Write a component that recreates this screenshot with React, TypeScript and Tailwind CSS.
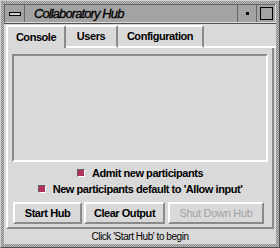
import React from "react";

const font = { fontFamily: '"Liberation Sans", Arial, sans-serif' };

function Check({ label }: { label: string }) {
  return (
    <div className="h-[12px] flex items-center gap-[7px]">
      <div className="w-[8px] h-[8px] bg-[#b03060] border border-t-[#5e5e5e] border-l-[#5e5e5e] border-b-white border-r-white" />
      <span className="text-[11px] font-bold tracking-[-0.45px] text-black leading-none whitespace-nowrap">{label}</span>
    </div>
  );
}

function Btn({ label, disabled, w }: { label: string; disabled?: boolean; w: string }) {
  return (
    <div
      className={`${w} h-[22px] flex items-center justify-center whitespace-nowrap border-2 border-t-white border-l-white border-b-[#8a8a8a] border-r-[#8a8a8a] text-[11px] ${disabled ? "text-[#a3a3a3] font-normal tracking-[-0.3px]" : "text-black font-bold tracking-[-0.45px]"}`}
    >
      {label}
    </div>
  );
}

export default function App() {
  return (
    <div
      style={font}
      className="w-[280px] h-[248px] bg-[repeating-conic-gradient(#8e8e8e_0_25%,#b8b8b8_0_50%)] bg-[length:2px_2px] flex flex-col border border-t-[#d0d0d0] border-l-[#d0d0d0] border-b-[#505050] border-r-[#505050] p-[3px]"
    >
      {/* title bar */}
      <div className="h-[19px] flex border border-t-[#666666] border-l-[#666666] border-b-[#dcdcdc] border-r-[#dcdcdc] bg-[#a3a3a3]">
        <div className="w-[20px] flex items-center justify-center border-r border-[#666666]">
          <div className="w-[12px] h-[4px] bg-[#d0d0d0] border border-black" />
        </div>
        <div className="flex-1 flex items-center pl-[9px]">
          <span className="text-[13px] italic tracking-[-0.9px] text-black leading-none [-webkit-text-stroke:0.3px_black]">Collaboratory Hub</span>
        </div>
        <div className="w-[19px] flex items-center justify-center border-l border-[#666666]">
          <div className="w-[3px] h-[3px] bg-black" />
        </div>
        <div className="w-[19px] flex items-center justify-center border-l border-[#666666]">
          <div className="w-[13px] h-[13px] border border-black bg-[#a3a3a3]" />
        </div>
      </div>
      {/* client */}
      <div className="h-[221px] bg-[#d9d9d9] flex flex-col border-t border-[#505050]">
        <div className="flex pl-[2px] pt-[1px] h-[24px]">
          <div className="w-[60px] flex items-center justify-center text-[11px] font-bold tracking-[-0.45px] border-l-2 border-t-2 border-r-2 border-l-white border-t-white border-r-[#8a8a8a]">Console</div>
          <div className="w-[52px] flex items-center justify-center text-[11px] font-bold tracking-[-0.45px] border-t-2 border-r-2 border-b-2 border-t-white border-r-[#8a8a8a] border-b-white">Users</div>
          <div className="w-[86px] flex items-center justify-center text-[11px] font-bold tracking-[-0.45px] border-t-2 border-r-2 border-b-2 border-t-white border-r-[#8a8a8a] border-b-white">Configuration</div>
          <div className="flex-1 border-b-2 border-white" />
        </div>
        <div className="mx-[2px] h-[181px] flex flex-col border-l-2 border-r-2 border-b-2 border-l-white border-r-[#8a8a8a] border-b-[#8a8a8a] px-[4px] pt-[6px]">
          <div className="h-[108px] border-2 border-t-[#8a8a8a] border-l-[#8a8a8a] border-b-white border-r-white bg-[#d9d9d9]" />
          <div className="flex flex-col items-center gap-[4px] mt-[5px]">
            <Check label="Admit new participants" />
            <Check label="New participants default to 'Allow input'" />
          </div>
          <div className="flex mt-[7px] pl-[1px]">
            <Btn label="Start Hub" w="w-[69px]" />
            <div className="w-[2px]" />
            <Btn label="Clear Output" w="w-[81px]" />
            <div className="w-[3px]" />
            <Btn label="Shut Down Hub" w="w-[96px]" disabled />
          </div>
        </div>
        <div className="flex-1 flex items-center justify-center text-[10px] tracking-[-0.45px] text-black">Click 'Start Hub' to begin</div>
      </div>
    </div>
  );
}
